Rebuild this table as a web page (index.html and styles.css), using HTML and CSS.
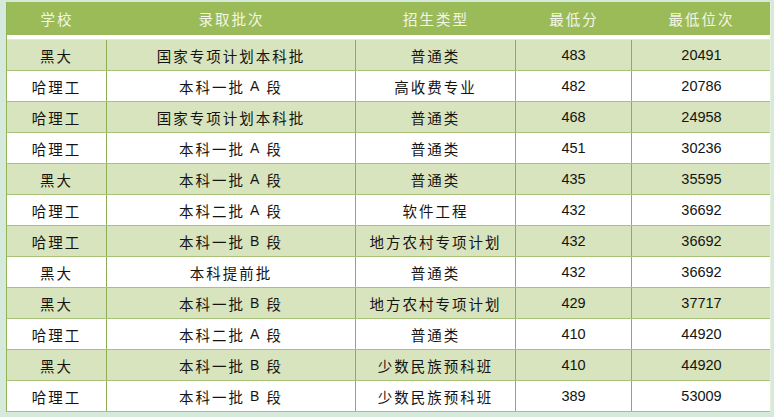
FILE: index.html
```html
<!DOCTYPE html>
<html lang="zh-CN">
<head>
<meta charset="utf-8">
<title>录取分数</title>
<link rel="stylesheet" href="styles.css">
</head>
<body>
<div class="sheet">
  <div class="row head">
    <div class="cell">学校</div>
    <div class="cell">录取批次</div>
    <div class="cell">招生类型</div>
    <div class="cell">最低分</div>
    <div class="cell">最低位次</div>
  </div>
  <div class="gap"></div>
  <div class="row odd"><div class="cell">黑大</div><div class="cell">国家专项计划本科批</div><div class="cell">普通类</div><div class="cell num">483</div><div class="cell num">20491</div></div>
  <div class="row"><div class="cell">哈理工</div><div class="cell">本科一批<span class="lat">A</span>段</div><div class="cell">高收费专业</div><div class="cell num">482</div><div class="cell num">20786</div></div>
  <div class="row odd"><div class="cell">哈理工</div><div class="cell">国家专项计划本科批</div><div class="cell">普通类</div><div class="cell num">468</div><div class="cell num">24958</div></div>
  <div class="row"><div class="cell">哈理工</div><div class="cell">本科一批<span class="lat">A</span>段</div><div class="cell">普通类</div><div class="cell num">451</div><div class="cell num">30236</div></div>
  <div class="row odd"><div class="cell">黑大</div><div class="cell">本科一批<span class="lat">A</span>段</div><div class="cell">普通类</div><div class="cell num">435</div><div class="cell num">35595</div></div>
  <div class="row"><div class="cell">哈理工</div><div class="cell">本科二批<span class="lat">A</span>段</div><div class="cell">软件工程</div><div class="cell num">432</div><div class="cell num">36692</div></div>
  <div class="row odd"><div class="cell">哈理工</div><div class="cell">本科一批<span class="lat">B</span>段</div><div class="cell">地方农村专项计划</div><div class="cell num">432</div><div class="cell num">36692</div></div>
  <div class="row"><div class="cell">黑大</div><div class="cell">本科提前批</div><div class="cell">普通类</div><div class="cell num">432</div><div class="cell num">36692</div></div>
  <div class="row odd"><div class="cell">黑大</div><div class="cell">本科一批<span class="lat">B</span>段</div><div class="cell">地方农村专项计划</div><div class="cell num">429</div><div class="cell num">37717</div></div>
  <div class="row"><div class="cell">哈理工</div><div class="cell">本科二批<span class="lat">A</span>段</div><div class="cell">普通类</div><div class="cell num">410</div><div class="cell num">44920</div></div>
  <div class="row odd"><div class="cell">黑大</div><div class="cell">本科一批<span class="lat">B</span>段</div><div class="cell">少数民族预科班</div><div class="cell num">410</div><div class="cell num">44920</div></div>
  <div class="row"><div class="cell">哈理工</div><div class="cell">本科一批<span class="lat">B</span>段</div><div class="cell">少数民族预科班</div><div class="cell num">389</div><div class="cell num">53009</div></div>
</div>
</body>
</html>
```
FILE: styles.css
```css
html, body {
  margin: 0;
  padding: 0;
}
body {
  background: #d6eadb;
  padding-top: 2px;
  padding-left: 6px;
  font-family: "Noto Sans CJK SC", "Noto Sans", sans-serif;
  color: #141414;
}
.sheet {
  width: 765px;
  border-left: 1px solid #94b25a;
  border-right: 1px solid #e6efdc;
  box-sizing: border-box;
  background: #ffffff;
}
.row {
  display: grid;
  grid-template-columns: 100px 249px 160px 116px 139px;
  height: 31px;
  border-bottom: 1px solid #a9c27a;
  box-sizing: border-box;
  background: #ffffff;
}
.row.odd {
  background: #d8e4bd;
}
.row.head {
  height: 33px;
  background: #9bbb59;
  border-bottom: none;
  color: #f3f7e6;
}
.gap {
  height: 4px;
  background: #ffffff;
  border-bottom: 1px solid #e3ebd3;
}
.cell {
  display: flex;
  align-items: center;
  justify-content: center;
  font-size: 14.5px;
  letter-spacing: 2px;
  border-right: 1px solid #8fad55;
  white-space: nowrap;
  font-weight: 400;
}
.cell:last-child {
  border-right: none;
}
.head .cell {
  border-right: none;
  font-size: 14.5px;
  letter-spacing: 2px;
}
.num {
  font-family: "Liberation Sans", Arial, sans-serif;
  font-size: 14.5px;
  letter-spacing: 0;
}
.lat {
  font-family: "Liberation Sans", Arial, sans-serif;
  font-size: 14px;
  letter-spacing: 0;
  margin: 0 7px 0 5px;
}
```
